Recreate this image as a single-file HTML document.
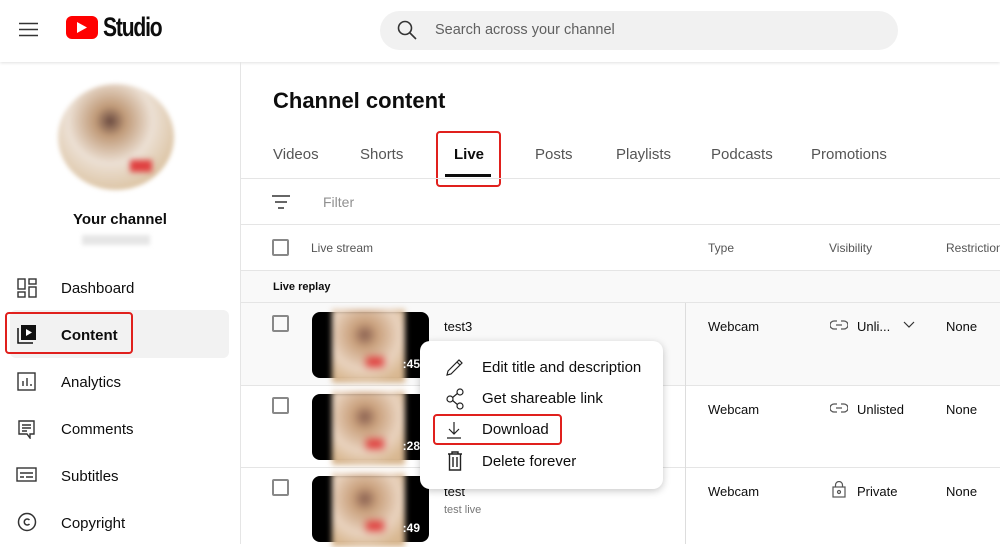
<!DOCTYPE html>
<html><head><style>
*{box-sizing:border-box;margin:0;padding:0}
body{width:1000px;height:544px;overflow:hidden;background:#fff;font-family:"Liberation Sans",Arial,sans-serif;color:#0d0d0d;position:relative}
.a{position:absolute}
.t{position:absolute;white-space:nowrap}
.red{border:2px solid #e0201d;border-radius:4px;position:absolute}
.cb{position:absolute;width:17px;height:17px;border:2px solid #888;border-radius:2px}
.thumb{position:absolute;width:117px;height:66px;background:#000;border-radius:8px}
.thumb .img{position:absolute;left:20px;top:-3px;width:73px;height:74px;background:radial-gradient(circle at 45% 35%,#8a6050 0,#c9a07c 20%,#e9d3bf 55%,#d8b790 80%);filter:blur(3px)}
.thumb .img:after{content:"";position:absolute;left:34px;top:48px;width:18px;height:10px;background:#e03838;filter:blur(3px)}
.thumb span{position:absolute;right:9px;bottom:7px;color:#fff;font-size:12px;font-weight:bold}
.nav{position:absolute;left:61px;font-size:15px;color:#0d0d0d}
.line{position:absolute;left:241px;right:0;height:1px;background:#e5e5e5}
</style></head><body>
<!-- header -->
<div class="a" style="left:0;top:0;width:1000px;height:62px;background:#fff;box-shadow:0 1px 3px rgba(0,0,0,.12)"></div>
<svg class="a" style="left:19px;top:22px" width="20" height="16"><path d="M0 1.5H19M0 7.5H19M0 13.5H19" stroke="#333" stroke-width="1.4"/></svg>
<div class="a" style="left:66px;top:16px;width:32px;height:23px;background:#f00;border-radius:6px"></div>
<svg class="a" style="left:77px;top:22px" width="11" height="11"><path d="M0 0L10 5.5L0 11Z" fill="#fff"/></svg>
<div class="t" style="left:103px;top:12px;font-size:27px;font-weight:bold;letter-spacing:-1.5px;transform:scaleX(.78);transform-origin:left">Studio</div>
<div class="a" style="left:380px;top:11px;width:518px;height:39px;background:#f1f1f1;border-radius:20px"></div>
<svg class="a" style="left:397px;top:20px" width="20" height="20"><circle cx="8" cy="8" r="6.5" stroke="#333" stroke-width="1.6" fill="none"/><path d="M13 13L19 19" stroke="#333" stroke-width="1.6"/></svg>
<div class="t" style="left:435px;top:22px;font-size:14.5px;color:#606060">Search across your channel</div>
<!-- sidebar -->
<div class="a" style="left:240px;top:62px;width:1px;height:482px;background:#e5e5e5"></div>
<div class="a" style="left:58px;top:84px;width:116px;height:106px;border-radius:50%;background:radial-gradient(circle at 45% 35%,#6a4a40 0,#c09a78 16%,#ece0d4 45%,#dcc4a4 75%,#ece4d6 100%);filter:blur(2px)"></div>
<div class="a" style="left:130px;top:160px;width:22px;height:12px;background:#e04040;filter:blur(3px)"></div>
<div class="t" style="left:73px;top:211px;font-size:15px;font-weight:bold">Your channel</div>
<div class="a" style="left:82px;top:235px;width:68px;height:10px;background:#e6e6e6;filter:blur(2px)"></div>
<div class="a" style="left:10px;top:310px;width:219px;height:48px;background:#f2f2f2;border-radius:6px"></div>
<svg class="a" style="left:17px;top:278px" width="20" height="20" fill="none" stroke="#333" stroke-width="1.4"><rect x="1" y="1" width="7" height="10"/><rect x="1" y="14" width="7" height="5"/><rect x="12" y="1" width="7" height="5"/><rect x="12" y="9" width="7" height="10"/></svg>
<div class="nav" style="top:280px">Dashboard</div>
<svg class="a" style="left:17px;top:324px" width="20" height="20"><rect x="4" y="1" width="15" height="15" fill="#111"/><path d="M9 5L15 8.5L9 12Z" fill="#fff"/><path d="M1 4V19H16" stroke="#111" stroke-width="1.5" fill="none"/></svg>
<div class="nav" style="top:327px;font-weight:bold">Content</div>
<div class="red" style="left:5px;top:312px;width:128px;height:42px"></div>
<svg class="a" style="left:17px;top:372px" width="20" height="20" fill="none" stroke="#333" stroke-width="1.4"><rect x="1" y="1" width="17" height="17"/><path d="M6 14V9M10 14V6M14 14V12"/></svg>
<div class="nav" style="top:374px">Analytics</div>
<svg class="a" style="left:17px;top:419px" width="20" height="20" fill="none" stroke="#333" stroke-width="1.4"><path d="M2 2H17V15H13V19L10 15H2Z"/><path d="M5 6H14M5 9H14M5 12H10"/></svg>
<div class="nav" style="top:421px">Comments</div>
<svg class="a" style="left:16px;top:467px" width="21" height="16" fill="none" stroke="#333" stroke-width="1.4"><rect x="1" y="1" width="19" height="13"/><path d="M4 6H17M4 10H8M10 10H17"/></svg>
<div class="nav" style="top:468px">Subtitles</div>
<svg class="a" style="left:17px;top:512px" width="20" height="20" fill="none" stroke="#333" stroke-width="1.5"><circle cx="10" cy="10" r="8.5"/><path d="M12.5 8A3 3 0 1 0 12.5 12"/></svg>
<div class="nav" style="top:515px">Copyright</div>
<!-- main -->
<div class="t" style="left:273px;top:88px;font-size:22px;font-weight:bold">Channel content</div>
<div class="t" style="left:273px;top:146px;font-size:15px;color:#555">Videos</div>
<div class="t" style="left:360px;top:146px;font-size:15px;color:#555">Shorts</div>
<div class="t" style="left:454px;top:146px;font-size:15px;font-weight:bold">Live</div>
<div class="a" style="left:445px;top:174px;width:46px;height:3px;background:#0d0d0d"></div>
<div class="red" style="left:436px;top:131px;width:65px;height:56px"></div>
<div class="t" style="left:535px;top:146px;font-size:15px;color:#555">Posts</div>
<div class="t" style="left:616px;top:146px;font-size:15px;color:#555">Playlists</div>
<div class="t" style="left:711px;top:146px;font-size:15px;color:#555">Podcasts</div>
<div class="t" style="left:811px;top:146px;font-size:15px;color:#555">Promotions</div>
<div class="line" style="top:178px"></div>
<svg class="a" style="left:271px;top:194px" width="20" height="16"><path d="M1 2H19M4 8H16M7 14H13" stroke="#333" stroke-width="1.5"/></svg>
<div class="t" style="left:323px;top:194px;font-size:14px;color:#909090">Filter</div>
<div class="line" style="top:224px"></div>
<div class="cb" style="left:272px;top:239px"></div>
<div class="t" style="left:311px;top:241px;font-size:12px;color:#555">Live stream</div>
<div class="t" style="left:708px;top:241px;font-size:12px;color:#555">Type</div>
<div class="t" style="left:829px;top:241px;font-size:12px;color:#555">Visibility</div>
<div class="t" style="left:946px;top:241px;font-size:12px;color:#555">Restriction</div>
<div class="a" style="left:241px;top:270px;right:0;height:33px;background:#f9f9f9;border-top:1px solid #e5e5e5;border-bottom:1px solid #e5e5e5"></div>
<div class="t" style="left:273px;top:281px;font-size:11px;font-weight:bold">Live replay</div>
<div class="a" style="left:241px;top:303px;right:0;height:82px;background:#f9f9f9"></div>
<div class="line" style="top:385px"></div>
<div class="line" style="top:467px"></div>
<div class="a" style="left:685px;top:303px;width:1px;height:241px;background:#ddd"></div>
<!-- rows -->
<div class="cb" style="left:272px;top:315px"></div>
<div class="thumb" style="left:312px;top:312px"><div class="img"></div><span>:45</span></div>
<div class="t" style="left:444px;top:319px;font-size:13px">test3</div>
<div class="t" style="left:708px;top:319px;font-size:13px">Webcam</div>
<div class="t" style="left:857px;top:319px;font-size:13px">Unli...</div>
<svg class="a" style="left:903px;top:321px" width="12" height="8"><path d="M1 1L6 6L11 1" stroke="#333" fill="none" stroke-width="1.2"/></svg>
<div class="t" style="left:946px;top:319px;font-size:13px">None</div>
<div class="cb" style="left:272px;top:397px"></div>
<div class="thumb" style="left:312px;top:394px"><div class="img"></div><span>:28</span></div>
<div class="t" style="left:708px;top:402px;font-size:13px">Webcam</div>
<div class="t" style="left:857px;top:402px;font-size:13px">Unlisted</div>
<div class="t" style="left:946px;top:402px;font-size:13px">None</div>
<div class="cb" style="left:272px;top:479px"></div>
<div class="thumb" style="left:312px;top:476px"><div class="img"></div><span>:49</span></div>
<div class="t" style="left:444px;top:484px;font-size:13px">test</div>
<div class="t" style="left:444px;top:504px;font-size:11px;color:#777">test live</div>
<div class="t" style="left:708px;top:484px;font-size:13px">Webcam</div>
<div class="t" style="left:857px;top:484px;font-size:13px">Private</div>
<div class="t" style="left:946px;top:484px;font-size:13px">None</div>
<svg class="a" style="left:830px;top:320px" width="18" height="10" fill="none" stroke="#555" stroke-width="1.3"><path d="M7 1H4A3.5 3.5 0 0 0 4 9H7M11 1H14A3.5 3.5 0 0 1 14 9H11M6 5H12"/></svg>
<svg class="a" style="left:830px;top:403px" width="18" height="10" fill="none" stroke="#555" stroke-width="1.3"><path d="M7 1H4A3.5 3.5 0 0 0 4 9H7M11 1H14A3.5 3.5 0 0 1 14 9H11M6 5H12"/></svg>
<svg class="a" style="left:832px;top:481px" width="14" height="17" fill="none" stroke="#555" stroke-width="1.2"><rect x="1" y="6" width="12" height="10"/><path d="M3.5 6V4A3.5 3.5 0 0 1 10.5 4V6"/><circle cx="7" cy="11" r="1.5"/></svg>
<!-- menu -->
<div class="a" style="left:420px;top:341px;width:243px;height:148px;background:#fff;border-radius:10px;box-shadow:0 2px 8px rgba(0,0,0,.22)"></div>
<svg class="a" style="left:445px;top:357px" width="20" height="20" fill="none" stroke="#222" stroke-width="1.2"><path d="M2 18L3 14L14 3L17 6L6 17Z M12 5L15 8"/></svg>
<div class="t" style="left:482px;top:359px;font-size:15px">Edit title and description</div>
<svg class="a" style="left:446px;top:388px" width="20" height="22" fill="none" stroke="#222" stroke-width="1.2"><circle cx="14" cy="4" r="3"/><circle cx="4" cy="11" r="3"/><circle cx="14" cy="18" r="3"/><path d="M6.6 9.5L11.4 5.5M6.6 12.5L11.4 16.5"/></svg>
<div class="t" style="left:482px;top:390px;font-size:15px">Get shareable link</div>
<svg class="a" style="left:446px;top:421px" width="16" height="18" fill="none" stroke="#222" stroke-width="1.2"><path d="M8 1V13M3 8L8 13L13 8M1 17H15"/></svg>
<div class="t" style="left:482px;top:421px;font-size:15px">Download</div>
<div class="red" style="left:433px;top:414px;width:129px;height:31px"></div>
<svg class="a" style="left:447px;top:451px" width="16" height="20" fill="none" stroke="#222" stroke-width="1.4"><path d="M1 3H15M5 3V1H11V3M2.5 3V19H13.5V3M6 6V16M10 6V16"/></svg>
<div class="t" style="left:482px;top:453px;font-size:15px">Delete forever</div>
</body></html>
